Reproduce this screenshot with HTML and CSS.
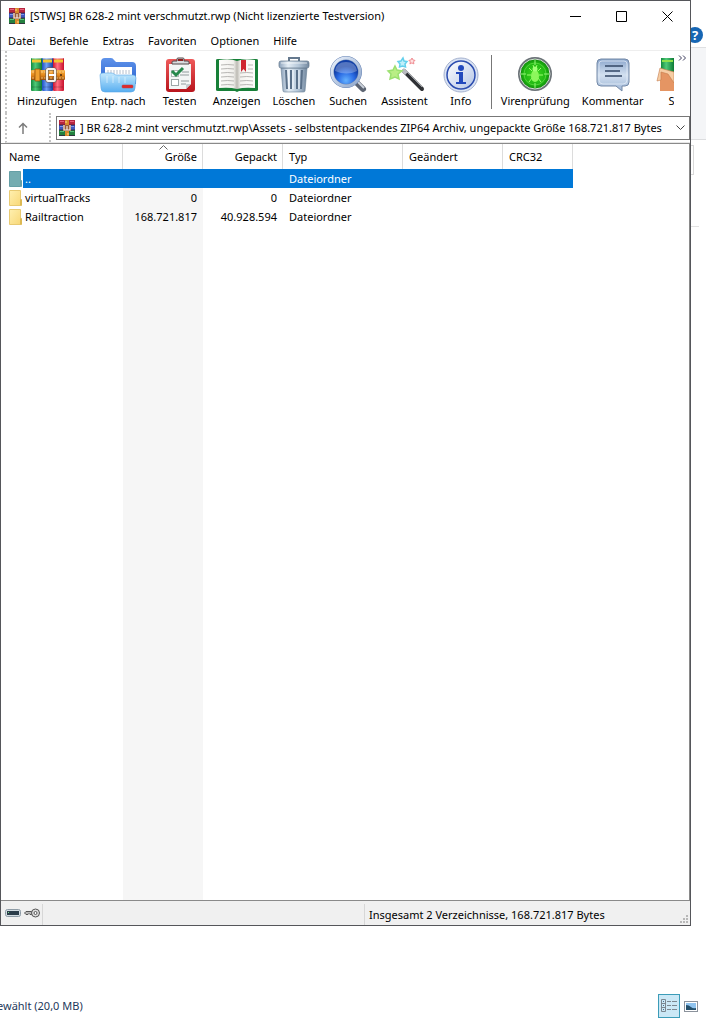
FILE: index.html
```html
<!DOCTYPE html>
<html lang="de">
<head>
  <meta charset="UTF-8" />
  <meta name="viewport" content="width=device-width, initial-scale=1" />
  <title>BR 628-2 mint verschmutzt.rwp</title>
  <link rel="stylesheet" href="styles.css">
</head>
<body>

  <!-- shared gradients and the archive logo -->
  <svg class="defs" width="0" height="0" aria-hidden="true">
    <defs>
      <linearGradient id="g-green" x2="1" y2="0"><stop offset="0" stop-color="#128a3c"/><stop offset=".4" stop-color="#4fc978"/><stop offset="1" stop-color="#0c7a34"/></linearGradient>
      <linearGradient id="g-blue" x2="1" y2="0"><stop offset="0" stop-color="#1c4fc0"/><stop offset=".4" stop-color="#6fa0f5"/><stop offset="1" stop-color="#173f9e"/></linearGradient>
      <linearGradient id="g-red" x2="1" y2="0"><stop offset="0" stop-color="#cf1230"/><stop offset=".4" stop-color="#ff6f80"/><stop offset="1" stop-color="#c8102c"/></linearGradient>
      <linearGradient id="g-belt" x2="0" y2="1"><stop offset="0" stop-color="#f6b24a"/><stop offset=".5" stop-color="#e58a1c"/><stop offset="1" stop-color="#9c4f0a"/></linearGradient>
      <linearGradient id="g-folder-back" x2="0" y2="1"><stop offset="0" stop-color="#5f93ea"/><stop offset="1" stop-color="#2a62cf"/></linearGradient>
      <linearGradient id="g-folder" x2="0" y2="1"><stop offset="0" stop-color="#c4e9fd"/><stop offset="1" stop-color="#58aef0"/></linearGradient>
      <linearGradient id="g-clip" x2="0" y2="1"><stop offset="0" stop-color="#ef5a5a"/><stop offset="1" stop-color="#b8141c"/></linearGradient>
      <linearGradient id="g-page" x2="1" y2="0"><stop offset="0" stop-color="#fdfdfb"/><stop offset=".8" stop-color="#f1f0ec"/><stop offset="1" stop-color="#bdbbb4"/></linearGradient>
      <linearGradient id="g-page2" x2="1" y2="0"><stop offset="0" stop-color="#bdbbb4"/><stop offset=".2" stop-color="#f4f3ef"/><stop offset="1" stop-color="#fdfdfb"/></linearGradient>
      <linearGradient id="g-steel" x2="1" y2="0"><stop offset="0" stop-color="#8ca2bb"/><stop offset=".3" stop-color="#e4edf5"/><stop offset=".65" stop-color="#b4c6d8"/><stop offset="1" stop-color="#73889f"/></linearGradient>
      <radialGradient id="g-lens" cy=".8"><stop offset="0" stop-color="#64b2ff"/><stop offset=".6" stop-color="#2a6be4"/><stop offset="1" stop-color="#1240a8"/></radialGradient>
      <linearGradient id="g-ring" x2="1" y2="1"><stop offset="0" stop-color="#eaf1fb"/><stop offset="1" stop-color="#8ea6ca"/></linearGradient>
      <linearGradient id="g-info" x2="1" y2="1"><stop offset="0" stop-color="#ffffff"/><stop offset="1" stop-color="#b3c4e6"/></linearGradient>
      <radialGradient id="g-radar"><stop offset="0" stop-color="#3fdc20"/><stop offset=".7" stop-color="#1fb512"/><stop offset="1" stop-color="#0b7e08"/></radialGradient>
      <linearGradient id="g-bubble" x2="0" y2="1"><stop offset="0" stop-color="#8ba6cc"/><stop offset=".5" stop-color="#d3e0f0"/><stop offset="1" stop-color="#9db6d6"/></linearGradient>
      <linearGradient id="g-list" x2="1" y2="1"><stop offset="0" stop-color="#fff0b0"/><stop offset="1" stop-color="#f8d878"/></linearGradient>
    </defs>
    <symbol id="logo" viewBox="0 0 16 16">
      <rect x="0" y="0" width="16" height="5" fill="#b5263f"/>
      <rect x="0" y="5" width="16" height="5" fill="#4058bc"/>
      <rect x="0" y="10" width="16" height="6" fill="#24803f"/>
      <path d="M0 5h16M0 10h16M0 15.500h16" stroke="#33203c" stroke-width=".8"/>
      <path d="M1 1.500h4M11 1.500h4" stroke="#e8607a"/>
      <path d="M1 6.500h3M12 6.500h3" stroke="#8094ee"/>
      <path d="M1 11.500h4M11 11.500h4" stroke="#5cc47c"/>
      <rect x="6" y="0" width="4" height="16" fill="#d98a2c"/>
      <rect x="4" y="5" width="8" height="6" fill="#9a5a38"/>
      <path d="M5 5v5h6v-5M8 6v4" fill="none" stroke="#f4e8e0" stroke-width="1.200"/>
      <path d="M7 1v2M9 13v2" stroke="#ffe08a"/>
    </symbol>
  </svg>

  <div class="desktop">

    <!-- file manager in the background -->
    <div class="explorer">
      <div class="explorer-tabs">
        <button class="help" aria-label="Hilfe">?</button>
      </div>
      <div class="explorer-ribbon"></div>
      <div class="explorer-address"><div class="explorer-path"></div></div>
      <div class="explorer-line"></div>
      <div class="explorer-status">
        <span class="selected-size">ewählt (20,0 MB)</span>
        <div class="views">
          <button class="view active" aria-label="Details">
            <svg width="16" height="14" viewBox="0 0 16 14" fill="none">
              <path d="M.5.500h4v12h-4zM.5 4.500h4M.5 8.500h4" stroke="#7b8790"/>
              <path d="M2 2.500h1M2 6.500h1M2 10.500h1" stroke="#49708c"/>
              <path d="M6 2.500h4M11 2.500h5M6 6.500h4M11 6.500h5M6 10.500h4M11 10.500h5" stroke="#7b8790"/>
            </svg>
          </button>
          <button class="view" aria-label="Große Symbole">
            <svg width="14" height="11" viewBox="0 0 14 11">
              <rect x=".5" y=".5" width="13" height="10" fill="#fff" stroke="#8b929c"/>
              <rect x="2" y="2" width="10" height="7" fill="#8fc3ef"/>
              <path d="M2 4q3 0 5 2t5 1v2H2z" fill="#24506c"/>
            </svg>
          </button>
        </div>
      </div>
    </div>

    <main class="window">
      <header class="titlebar">
        <svg class="logo" width="16" height="16"><use href="#logo"/></svg>
        <h1>[STWS] BR 628-2 mint verschmutzt.rwp (Nicht lizenzierte Testversion)</h1>
        <div class="window-buttons">
          <button aria-label="Minimieren"><svg width="11" height="11" viewBox="0 0 11 11"><path d="M0 5.500h11" stroke="#000"/></svg></button>
          <button aria-label="Maximieren"><svg width="11" height="11" viewBox="0 0 11 11"><path d="M.5.500h10v10h-10z" fill="none" stroke="#000"/></svg></button>
          <button aria-label="Schließen"><svg width="11" height="11" viewBox="0 0 11 11"><path d="M.5.500l10 10M10.500.500l-10 10" stroke="#000"/></svg></button>
        </div>
      </header>

      <nav class="menu">
        <button>Datei</button>
        <button>Befehle</button>
        <button>Extras</button>
        <button>Favoriten</button>
        <button>Optionen</button>
        <button>Hilfe</button>
      </nav>

      <div class="toolbar">
        <div class="tools">
          <button class="tool wide">
            <svg width="40" height="40" viewBox="0 0 40 40">
              <rect x="4" y="3" width="11" height="33" rx="1" fill="url(#g-green)"/>
              <rect x="15" y="3" width="11" height="33" rx="1" fill="url(#g-blue)"/>
              <rect x="26" y="3" width="11" height="33" rx="1" fill="url(#g-red)"/>
              <path d="M5 3.500h9M16 3.500h9M27 3.500h9" stroke="#fff" stroke-opacity=".5"/>
              <path d="M5 6h9M16 6h9M27 6h9" stroke="#f2c531" stroke-width="3"/>
              <path d="M5 32h9M16 32h9M27 32h9" stroke="#000" stroke-opacity=".2"/>
              <rect x="4" y="15" width="34" height="10" rx="1" fill="url(#g-belt)"/>
              <path d="M5 17h32M5 23h32" stroke="#ffe0a0" stroke-dasharray="2 1" stroke-width=".7"/>
              <path d="M8 14h5v12H8z" fill="#f0a030" stroke="#8a4806" stroke-width=".7"/>
              <rect x="20" y="14" width="8" height="12" rx="1" fill="none" stroke="#6a5a50" stroke-width="3.200"/>
              <rect x="20" y="14" width="8" height="12" rx="1" fill="none" stroke="#f6f2ea" stroke-width="2"/>
              <path d="M22 20h7" stroke="#fff" stroke-width="2"/>
              <circle cx="34" cy="20" r="1" fill="#4a2808"/>
            </svg>
            <span>Hinzufügen</span>
          </button>
          <button class="tool wide">
            <svg width="40" height="40" viewBox="0 0 40 40">
              <path d="M3 7q0-4 4-4h6q2 0 3 2l2 2h16q4 0 4 4v18H3z" fill="url(#g-folder-back)"/>
              <path d="M7 12h27v12H7z" fill="#fff"/>
              <path d="M10 15v4M13 15v4M16 15v4M19 15v4M22 15v4M25 15v4M28 15v4M31 15v4" stroke="#b4bfce"/>
              <path d="M2 20q0-2 3-2h8q2 0 3 1t3 1h16q3 0 3 3l-1 10q0 4-4 4H7q-4 0-4-4z" fill="url(#g-folder)" stroke="#5aa6e6" stroke-width=".6"/>
              <path d="M9 21v7M15 21v7M21 22v6M27 22v6" stroke="#fff" stroke-opacity=".25" stroke-width="2"/>
              <rect x="24" y="30" width="11" height="3" rx="1" fill="#df2b2b" stroke="#ad4050" stroke-width=".5"/>
            </svg>
            <span>Entp. nach</span>
          </button>
          <button class="tool">
            <svg width="40" height="40" viewBox="0 0 40 40">
              <rect x="6" y="4" width="29" height="33" rx="3" fill="url(#g-clip)"/>
              <path d="M9 9h22v20l-5 5H9z" fill="#f3f5f5"/>
              <path d="M31 29l-5 5v-4q0-1 1-1z" fill="#c4cbd0"/>
              <path d="M12 9V7q0-1 2-1h3V4q0-1 1-1h5q1 0 1 1v2h3q2 0 2 1v2z" fill="#d7d9dc" stroke="#53484a"/>
              <rect x="18" y="4" width="5" height="2" fill="#8a2020"/>
              <rect x="11.500" y="15.500" width="7" height="6" fill="#fff" stroke="#b2bab8"/>
              <rect x="11.500" y="24.500" width="7" height="6" fill="#fff" stroke="#9ca6a6"/>
              <path d="M12 16l4 4 7-7" fill="none" stroke="#26884c" stroke-width="3"/>
              <path d="M22 17h7M20 20h9M21 26h8M21 29h5" stroke="#929b9d"/>
            </svg>
            <span>Testen</span>
          </button>
          <button class="tool">
            <svg width="44" height="40" viewBox="0 0 44 40">
              <path d="M1 5q0-1 2-1h38q2 0 2 1v30q0 1-2 1H24l-2 1-2-1H3q-2 0-2-1z" fill="#178038"/>
              <path d="M4 5q11-2 18 1v28q-7-2-18-1z" fill="url(#g-page)"/>
              <path d="M40 5q-11-2-18 1v28q7-2 18-1z" fill="url(#g-page2)"/>
              <path d="M6 10q7-1 13 0M6 14q7-1 13 0M6 18q7-1 13 0M6 22q7-1 13 0M6 26q7-1 13 0M6 30q7-1 13 0M25 18q7-1 13 0M25 22q7-1 13 0M25 26q7-1 13 0M25 30q7-1 13 0M33 10h5M33 14h5" fill="none" stroke="#b8b7b4"/>
              <path d="M26 5h5v12l-2.500-3-2.500 3z" fill="#cf2630"/>
            </svg>
            <span>Anzeigen</span>
          </button>
          <button class="tool">
            <svg width="40" height="40" viewBox="0 0 40 40">
              <path d="M15 6V3h10v3" fill="none" stroke="#65798e" stroke-width="2"/>
              <path d="M7 13h26l-2 23q0 1-2 1H11q-2 0-2-1z" fill="url(#g-steel)" stroke="#677d94" stroke-width=".6"/>
              <path d="M12 15l1 19M17 15v19M23 15v19M28 15l-1 19" stroke="#5a7089" stroke-width="2"/>
              <path d="M14 15l1 19M19 15v19M25 15v19" stroke="#f6faff"/>
              <rect x="5" y="6" width="30" height="7" rx="2" fill="url(#g-steel)" stroke="#61758b" stroke-width=".7"/>
              <path d="M7 8h26" stroke="#fff" stroke-opacity=".7"/>
            </svg>
            <span>Löschen</span>
          </button>
          <button class="tool">
            <svg width="40" height="40" viewBox="0 0 40 40">
              <path d="M29 28l6 6" stroke="#5d6573" stroke-width="6" stroke-linecap="round"/>
              <path d="M29 26l7 7" stroke="#cbd2dc" stroke-width="2"/>
              <circle cx="18" cy="17" r="14" fill="url(#g-lens)" stroke="#6885b5" stroke-width="4"/>
              <circle cx="18" cy="17" r="14" fill="none" stroke="url(#g-ring)" stroke-width="3"/>
              <path d="M7 16q1-9 11-9t11 9q-10 5-22 0z" fill="#fff" fill-opacity=".28"/>
            </svg>
            <span>Suchen</span>
          </button>
          <button class="tool">
            <svg width="40" height="40" viewBox="0 0 40 40">
              <path d="M19 16l18 18" stroke="#303236" stroke-width="4" stroke-linecap="round"/>
              <path d="M20 15l17 17" stroke="#9a9ea4"/>
              <path d="M17.500 14.500l4 4" stroke="#b9bcc0" stroke-width="4"/>
              <path d="M10 11l2 4 5 1-4 3 1 5-4-2-5 2 1-5-3-3 5-1z" fill="#b9ee85" stroke="#9be070" stroke-width="1.500"/>
              <path d="M18 3l1 3 3 .5-2 2.500.5 3-3-1-3 1 .5-3-2-2.500 3-.5z" fill="#c0effa" stroke="#64d0ec" stroke-width="1.500"/>
              <path d="M27 3l1 2 2 .4-1.500 1.500.4 2-2-1-2 1 .5-2-1.500-1.500 2-.4z" fill="#ffe0e0" stroke="#f08c92"/>
            </svg>
            <span>Assistent</span>
          </button>
          <button class="tool">
            <svg width="40" height="40" viewBox="0 0 40 40">
              <circle cx="20" cy="20" r="17" fill="#dbe4f4" stroke="#a5b2cf"/>
              <circle cx="20" cy="20" r="14" fill="url(#g-info)" stroke="#2b4caf" stroke-width="1.500"/>
              <circle cx="20" cy="13" r="3" fill="#2249bd"/>
              <path d="M15 17h7v10h3v2H15v-2h3v-8h-3z" fill="#2249bd"/>
            </svg>
            <span>Info</span>
          </button>
          <div class="separator"></div>
          <button class="tool">
            <svg width="40" height="40" viewBox="0 0 40 40">
              <circle cx="20" cy="19" r="16" fill="url(#g-radar)" stroke="#6c7378" stroke-width="2"/>
              <circle cx="20" cy="19" r="15" fill="none" stroke="#d6ddd6"/>
              <circle cx="20" cy="19" r="11" fill="none" stroke="#6fe850" stroke-opacity=".6"/>
              <path d="M20 5v5M20 28v5M6 19h5M29 19h5" stroke="#96f57a"/>
              <path d="M14 13l3 3M26 13l-3 3M12 20h4M28 20h-4M14 27l3-4M26 27l-3-4M18 10l1 3M22 10l-1 3" stroke="#9cfc70"/>
              <ellipse cx="20" cy="21" rx="4" ry="6" fill="#8cf75c"/>
              <circle cx="20" cy="14" r="2.500" fill="#a2ff78"/>
            </svg>
            <span>Virenprüfung</span>
          </button>
          <button class="tool">
            <svg width="40" height="40" viewBox="0 0 40 40">
              <path d="M8 4h24q4 0 4 4v19q0 4-4 4h-3v5l-6-5H8q-4 0-4-4V8q0-4 4-4z" fill="url(#g-bubble)" stroke="#7388a6"/>
              <path d="M9 6h22q3 0 3 3v16q0 4-4 4H10q-4 0-4-4V9q0-3 3-3z" fill="none" stroke="#e8f0f9" stroke-opacity=".7"/>
              <path d="M12 11h18M12 16h15M12 21h17" stroke="#334765" stroke-width="1.500"/>
            </svg>
            <span>Kommentar</span>
          </button>
          <button class="tool">
            <svg width="44" height="40" viewBox="0 0 44 40">
              <rect x="5" y="3" width="13" height="16" fill="url(#g-green)"/>
              <rect x="18" y="3" width="11" height="16" fill="url(#g-blue)"/>
              <path d="M6 6h11" stroke="#8ee04a" stroke-width="2"/>
              <path d="M4 14l14 3h22v19H4z" fill="#e59563"/>
              <path d="M4 13l-3 13 4-1v-8l7 2 6 9V17z" fill="#f6cda4" stroke="#c57a4c" stroke-width=".6"/>
            </svg>
            <span>SFX</span>
          </button>
        </div>
        <button class="more" aria-label="Weitere Symbole">
          <svg width="9" height="6" viewBox="0 0 9 6" fill="none"><path d="M1 .5L3.500 3 1 5.500M5 .5L7.500 3 5 5.500" stroke="#3c3c5c"/></svg>
        </button>
      </div>

      <div class="address-row">
        <button class="up" aria-label="Übergeordneter Ordner">
          <svg width="10" height="12" viewBox="0 0 10 12" fill="none"><path d="M5 12V1.500M1 5.500l4-4 4 4" stroke="#7c7c7c" stroke-width="1.500"/></svg>
        </button>
        <div class="address">
          <svg class="logo" width="16" height="16"><use href="#logo"/></svg>
          <input type="text" aria-label="Pfad" value="] BR 628-2 mint verschmutzt.rwp\Assets - selbstentpackendes ZIP64 Archiv, ungepackte Größe 168.721.817 Bytes">
          <button class="drop" aria-label="Verlauf"><svg width="9" height="6" viewBox="0 0 9 6" fill="none"><path d="M.5.500l4 4 4-4" stroke="#444"/></svg></button>
        </div>
      </div>

      <section class="files">
        <table>
          <colgroup>
            <col class="col-name"><col class="col-size"><col class="col-size"><col class="col-type"><col class="col-date"><col class="col-crc">
          </colgroup>
          <thead>
            <tr>
              <th scope="col">Name</th>
              <th scope="col" class="number sorted" aria-sort="ascending">
                <svg class="sort" width="9" height="5" viewBox="0 0 9 5" fill="none"><path d="M.5 4.500l4-4 4 4" stroke="#666"/></svg>Größe
              </th>
              <th scope="col" class="number">Gepackt</th>
              <th scope="col">Typ</th>
              <th scope="col">Geändert</th>
              <th scope="col">CRC32</th>
            </tr>
          </thead>
          <tbody>
            <tr class="current">
              <td class="name"><svg width="14" height="16" viewBox="0 0 14 16"><path d="M.5.500h11v15H.5z" fill="#74acb1" stroke="#659fa6"/><path d="M11.500 9.500h1v6h-1z" stroke="#659fa6" fill="#9ac4c0"/></svg><span>..</span></td>
              <td></td><td></td><td>Dateiordner</td><td></td><td></td>
            </tr>
            <tr>
              <td class="name"><svg width="14" height="16" viewBox="0 0 14 16"><path d="M.5.500h11v15H.5z" fill="url(#g-list)" stroke="#e8ca72"/><path d="M11.500 9.500h1v6h-1z" stroke="#dcb953" fill="#fff2c0"/></svg><span>virtualTracks</span></td>
              <td class="number">0</td><td class="number">0</td><td>Dateiordner</td><td></td><td></td>
            </tr>
            <tr>
              <td class="name"><svg width="14" height="16" viewBox="0 0 14 16"><path d="M.5.500h11v15H.5z" fill="url(#g-list)" stroke="#e8ca72"/><path d="M11.500 9.500h1v6h-1z" stroke="#dcb953" fill="#fff2c0"/></svg><span>Railtraction</span></td>
              <td class="number">168.721.817</td><td class="number">40.928.594</td><td>Dateiordner</td><td></td><td></td>
            </tr>
          </tbody>
        </table>
      </section>

      <footer class="statusbar">
        <div class="status-icons">
          <svg width="16" height="8" viewBox="0 0 16 8"><rect x=".5" y=".5" width="15" height="7" rx="2" fill="#d3dce2" stroke="#8d9ba5"/><rect x="2" y="2" width="12" height="4" fill="#2b3d4a"/><path d="M3 3.500h1" stroke="#7be08c"/></svg>
          <svg width="17" height="10" viewBox="0 0 17 10" fill="none"><path d="M8 3.500H2L.5 5 2 6.500h2l1-1 1 1h2" fill="#b8b8b8" stroke="#555"/><circle cx="11.500" cy="5" r="4" fill="#ddd" stroke="#555"/><circle cx="11.500" cy="5" r="1.500" fill="#fff" stroke="#555"/></svg>
        </div>
        <div class="status-selection"></div>
        <div class="status-total">
          <span>Insgesamt 2 Verzeichnisse, 168.721.817 Bytes</span>
          <svg class="grip" width="8" height="8" viewBox="0 0 8 8"><path d="M6 0h2v2H6zM3 3h2v2H3zM6 3h2v2H6zM0 6h2v2H0zM3 6h2v2H3zM6 6h2v2H6z" fill="#b8b8b8"/></svg>
        </div>
      </footer>
    </main>

  </div>

</body>
</html>
```
FILE: styles.css
```css
:root {
  --frame: #55565a;
  --line: #dcdcdc;
  --select: #0078d7;
  --bar: #f0f0f0;
}
* {
  box-sizing: border-box;
}
body {
  margin: 0;
  font-family: "Noto Sans", "Open Sans", sans-serif;
  font-size: 11px;
  line-height: 16px;
  color: #000;
  background: #fff;
}
button {
  margin: 0;
  padding: 0;
  border: 0;
  background: none;
  font: inherit;
  color: inherit;
}
svg {
  display: block;
  flex: none;
}
.defs {
  position: absolute;
}
.desktop {
  position: relative;
  height: 100vh;
  min-height: 400px;
  overflow: hidden;
}

/* file manager behind the archive window */
.explorer {
  display: flex;
  flex-direction: column;
  height: 100%;
}
.explorer-tabs {
  display: flex;
  justify-content: flex-end;
  align-items: flex-end;
  height: 47px;
  padding: 0 3px 4px 0;
}
.help {
  width: 16px;
  height: 16px;
  border-radius: 50%;
  background: #1666b4;
  color: #fff;
  font-size: 13px;
  font-weight: 700;
  line-height: 16px;
}
.explorer-ribbon {
  height: 93px;
  background: #f4f5f7;
  border-top: 1px solid #dfe0e2;
  border-bottom: 1px solid #dcdddf;
}
.explorer-address {
  height: 86px;
  padding: 5px 12px 0 0;
}
.explorer-path {
  height: 30px;
  border: 1px solid #d9d9d9;
}
.explorer-line {
  margin-right: 7px;
  border-top: 1px solid #e2e2e2;
}
.explorer-status {
  display: flex;
  align-items: center;
  justify-content: space-between;
  height: 24px;
  margin-top: auto;
  padding-right: 4px;
}
.selected-size {
  margin-left: -3px;
  color: #1e395b;
}
.views {
  display: flex;
}
.view {
  display: flex;
  align-items: center;
  justify-content: center;
  width: 22px;
  height: 24px;
}
.view.active {
  background: #cbe8f6;
  border: 1px solid #3c9cb8;
}

/* archive window */
.window {
  position: absolute;
  top: 0;
  left: 0;
  right: 15px;
  bottom: 92px;
  display: flex;
  flex-direction: column;
  border: 1px solid var(--frame);
  background: #fff;
}
.titlebar {
  display: flex;
  align-items: center;
  height: 30px;
  padding-left: 8px;
}
.titlebar h1 {
  flex: 1;
  margin: 0 0 0 5px;
  font-size: 11px;
  font-weight: 400;
  white-space: nowrap;
}
.window-buttons {
  display: flex;
}
.window-buttons button {
  display: flex;
  align-items: center;
  justify-content: center;
  width: 46px;
  height: 28px;
}
.menu {
  display: flex;
  height: 20px;
  padding-top: 1px;
  border-bottom: 1px solid #eee;
}
.menu button {
  padding: 0 7px;
}
.toolbar {
  display: flex;
  justify-content: space-between;
  height: 62px;
  margin-left: 4px;
  border-left: 2px dotted #c4c4c4;
}
.tools {
  display: flex;
  flex: 1;
  gap: 2px;
  overflow: hidden;
  padding-left: 4px;
}
.tool {
  display: flex;
  flex-direction: column;
  align-items: center;
  flex: none;
  min-width: 52px;
  padding: 4px 5px 0;
}
.tool.wide {
  padding: 4px 6px 0;
}
.tool span {
  margin-top: -2px;
}
.separator {
  flex: none;
  width: 1px;
  height: 54px;
  margin: 4px 2px 0;
  background: #777;
}
.more {
  width: 16px;
  height: 14px;
  padding-left: 4px;
}
.address-row {
  display: flex;
  height: 30px;
  margin-left: 4px;
  border-left: 2px dotted #c4c4c4;
  border-bottom: 1px solid #e6e6e6;
}
.up {
  display: flex;
  align-items: center;
  justify-content: center;
  width: 44px;
  padding-right: 10px;
  border-right: 2px dotted #c4c4c4;
}
.address {
  display: flex;
  align-items: center;
  flex: 1;
  height: 24px;
  margin: 3px 0 0 5px;
  padding-left: 2px;
  border: 1px solid #777;
}
.address input {
  flex: 1;
  min-width: 0;
  padding: 0 0 0 5px;
  border: 0;
  outline: 0;
  background: none;
  font: inherit;
}
.drop {
  width: 13px;
  height: 6px;
}

/* file list */
.files {
  flex: 1;
  overflow: hidden;
  border: 1px solid #8a8a8a;
  border-left: 0;
  background: linear-gradient(#f6f6f6, #f6f6f6) 122px 44px / 80px 100% no-repeat;
}
table {
  width: 572px;
  table-layout: fixed;
  border-collapse: separate;
  border-spacing: 0;
}
.col-name {
  width: 122px;
}
.col-size {
  width: 80px;
}
.col-type {
  width: 120px;
}
.col-date {
  width: 100px;
}
.col-crc {
  width: 70px;
}
th, td {
  padding: 0 6px;
  text-align: left;
  font-weight: 400;
  white-space: nowrap;
}
th {
  position: relative;
  height: 25px;
  padding-right: 5px;
  border-right: 1px solid var(--line);
}
th:first-child {
  padding-left: 8px;
}
td {
  height: 19px;
}
th.number,
td.number {
  text-align: right;
}
.sort {
  position: absolute;
  top: 1px;
  left: 36px;
}
.name {
  display: flex;
  align-items: center;
  padding: 0 0 0 8px;
}
.name span {
  flex: 1;
  padding-left: 2px;
}
.current td {
  background: var(--select);
  color: #fff;
}
.current .name {
  background: linear-gradient(90deg, #fff 22px, var(--select) 22px);
}

.statusbar {
  display: flex;
  align-items: flex-end;
  height: 24px;
  background: var(--bar);
}
.status-icons {
  display: flex;
  align-items: center;
  gap: 3px;
  width: 42px;
  height: 21px;
  padding: 0 0 3px 4px;
  border-right: 1px solid #d7d7d7;
}
.status-selection {
  flex: 1;
  height: 21px;
  border-right: 1px solid #d7d7d7;
}
.status-total {
  display: flex;
  flex: 1;
  align-items: center;
  justify-content: space-between;
  height: 21px;
  padding-left: 4px;
}
.grip {
  align-self: flex-end;
  margin: 0 2px 2px 0;
}
```
